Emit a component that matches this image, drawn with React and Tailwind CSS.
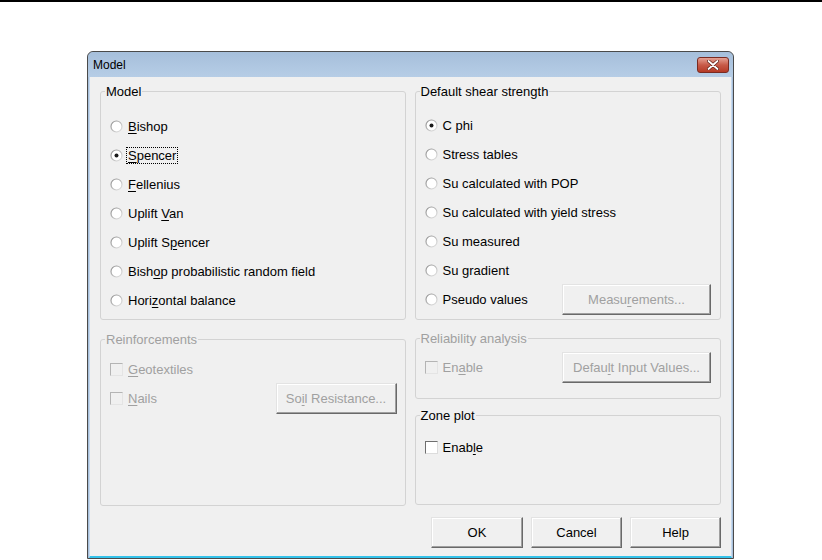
import React from "react";

const font = { fontFamily: '"Liberation Sans", Arial, sans-serif' };

function Radio({ checked }) {
  return (
    <svg width="13" height="13" viewBox="0 0 13 13" className="shrink-0">
      <defs>
        <linearGradient id="rg" x1="0" y1="0" x2="1" y2="1">
          <stop offset="0" stopColor="#8d8d8d" />
          <stop offset="1" stopColor="#e6e6e6" />
        </linearGradient>
      </defs>
      <circle cx="6.5" cy="6.5" r="5.5" fill="#fff" stroke="url(#rg)" strokeWidth="1.2" />
      {checked && <circle cx="6.5" cy="6.5" r="2" fill="#1a1a1a" />}
    </svg>
  );
}

function Check({ disabled }) {
  return (
    <span
      className={
        "inline-block w-[13px] h-[13px] shrink-0 border " +
        (disabled
          ? "border-t-[#b4b4b4] border-l-[#b4b4b4] border-r-[#e4e4e4] border-b-[#e4e4e4] bg-[#f0f0f0]"
          : "border-t-[#6e6e6e] border-l-[#6e6e6e] border-r-[#dcdcdc] border-b-[#dcdcdc] bg-white")
      }
    />
  );
}

function U({ children }) {
  return <span className="underline underline-offset-2">{children}</span>;
}

function Btn({ children, disabled, className = "" }) {
  return (
    <button
      className={
        "h-[31px] bg-[#f0f0f0] border border-t-[#e3e3e3] border-l-[#e3e3e3] border-r-[#696969] border-b-[#696969] shadow-[inset_-1px_-1px_0_#a0a0a0,inset_1px_1px_0_#ffffff] text-[13px] " +
        (disabled ? "text-[#a0a0a0] " : "text-black ") +
        className
      }
    >
      {children}
    </button>
  );
}

function Group({ title, disabled, className = "", children }) {
  return (
    <fieldset
      className={
        "border border-[#d3d3d3] rounded-[3px] px-[9px] " + className
      }
    >
      <legend
        className={
          "ml-[-5px] px-[1px] text-[13px] leading-[15px] " +
          (disabled ? "text-[#a0a0a0]" : "text-black")
        }
      >
        {title}
      </legend>
      {children}
    </fieldset>
  );
}

function Row({ children, className = "" }) {
  return <div className={"h-[29px] flex items-center gap-[5px] " + className}>{children}</div>;
}

export default function App() {
  const left = [
    [<><U>B</U>ishop</>, false],
    [<span className="border border-dotted border-black px-[1px] -mx-[2px]"><U>S</U>pencer</span>, true],
    [<><U>F</U>ellenius</>, false],
    [<>Uplift <U>V</U>an</>, false],
    [<>Uplift S<U>p</U>encer</>, false],
    [<>Bish<U>o</U>p probabilistic random field</>, false],
    [<>Hori<U>z</U>ontal balance</>, false],
  ];
  const right = [
    ["C phi", true],
    ["Stress tables", false],
    ["Su calculated with POP", false],
    ["Su calculated with yield stress", false],
    ["Su measured", false],
    ["Su gradient", false],
  ];

  return (
    <div className="w-[822px] h-[560px] bg-white overflow-hidden border-t-2 border-black" style={font}>
      <div className="ml-[87px] mt-[49px] w-[647px] h-[508px] rounded-t-[6px] border border-[#4a4a4a] bg-[#a9c1dc] flex flex-col">
        <div className="h-[25px] flex items-center justify-between pl-[5px] pr-[4px] bg-gradient-to-b from-[#a6bfdb] to-[#b6cde6] rounded-t-[6px]">
          <span className="text-[12px] text-black">Model</span>
          <div className="w-[32px] h-[16px] mt-[1px] rounded-[3px] border border-[#7a2b22] bg-gradient-to-b from-[#e4a093] via-[#c75a48] to-[#b53a26] flex items-center justify-center">
            <svg width="12" height="10" viewBox="0 0 12 10">
              <path d="M1.5 1 L10.5 9 M10.5 1 L1.5 9" stroke="#5a1a12" strokeWidth="3.2" strokeLinecap="round" />
              <path d="M1.5 1 L10.5 9 M10.5 1 L1.5 9" stroke="#ffffff" strokeWidth="1.8" strokeLinecap="round" />
            </svg>
          </div>
        </div>
        <div className="flex-1 mx-[1px] border-l border-r border-[#c6d9ee] bg-[#f0f0f0] border-b-2 border-b-[#34c2ea] px-[10px] pt-[7px] text-[13px] text-black">
          <div className="flex gap-[9px]">
            <div className="w-[306px] flex flex-col gap-[12px]">
              <Group title="Model" className="h-[236px] pt-[13px]">
                {left.map(([label, on], i) => (
                  <Row key={i}>
                    <Radio checked={on} />
                    <span>{label}</span>
                  </Row>
                ))}
              </Group>
              <Group title="Reinforcements" disabled className="h-[174px] pt-[8px]">
                <Row className="text-[#a0a0a0]">
                  <Check disabled />
                  <span><U>G</U>eotextiles</span>
                </Row>
                <Row className="text-[#a0a0a0]">
                  <Check disabled />
                  <span><U>N</U>ails</span>
                  <Btn disabled className="ml-auto w-[121px] mr-[-1px]">So<U>i</U>l Resistance...</Btn>
                </Row>
              </Group>
            </div>
            <div className="w-[307px] flex flex-col">
              <Group title="Default shear strength" className="h-[236px] pt-[12px]">
                {right.map(([label, on], i) => (
                  <Row key={i}>
                    <Radio checked={on} />
                    <span>{label}</span>
                  </Row>
                ))}
                <Row>
                  <Radio />
                  <span>Pseudo values</span>
                  <Btn disabled className="ml-auto w-[149px]">Measu<U>r</U>ements...</Btn>
                </Row>
              </Group>
              <Group title="Reliability analysis" disabled className="mt-[11px] h-[68px] pt-[5px]">
                <Row className="text-[#a0a0a0] h-[33px]">
                  <Check disabled />
                  <span>En<U>a</U>ble</span>
                  <Btn disabled className="ml-auto w-[149px]">Defau<U>l</U>t Input Values...</Btn>
                </Row>
              </Group>
              <Group title="Zone plot" className="mt-[9px] h-[97px] pt-[10px]">
                <Row>
                  <Check />
                  <span>Enab<U>l</U>e</span>
                </Row>
              </Group>
            </div>
          </div>
          <div className="flex justify-end gap-[8px] mt-[11px]">
            <Btn className="w-[92px] border-[#3c3c3c]">OK</Btn>
            <Btn className="w-[91px]">Cancel</Btn>
            <Btn className="w-[91px]">Help</Btn>
          </div>
        </div>
      </div>
    </div>
  );
}
